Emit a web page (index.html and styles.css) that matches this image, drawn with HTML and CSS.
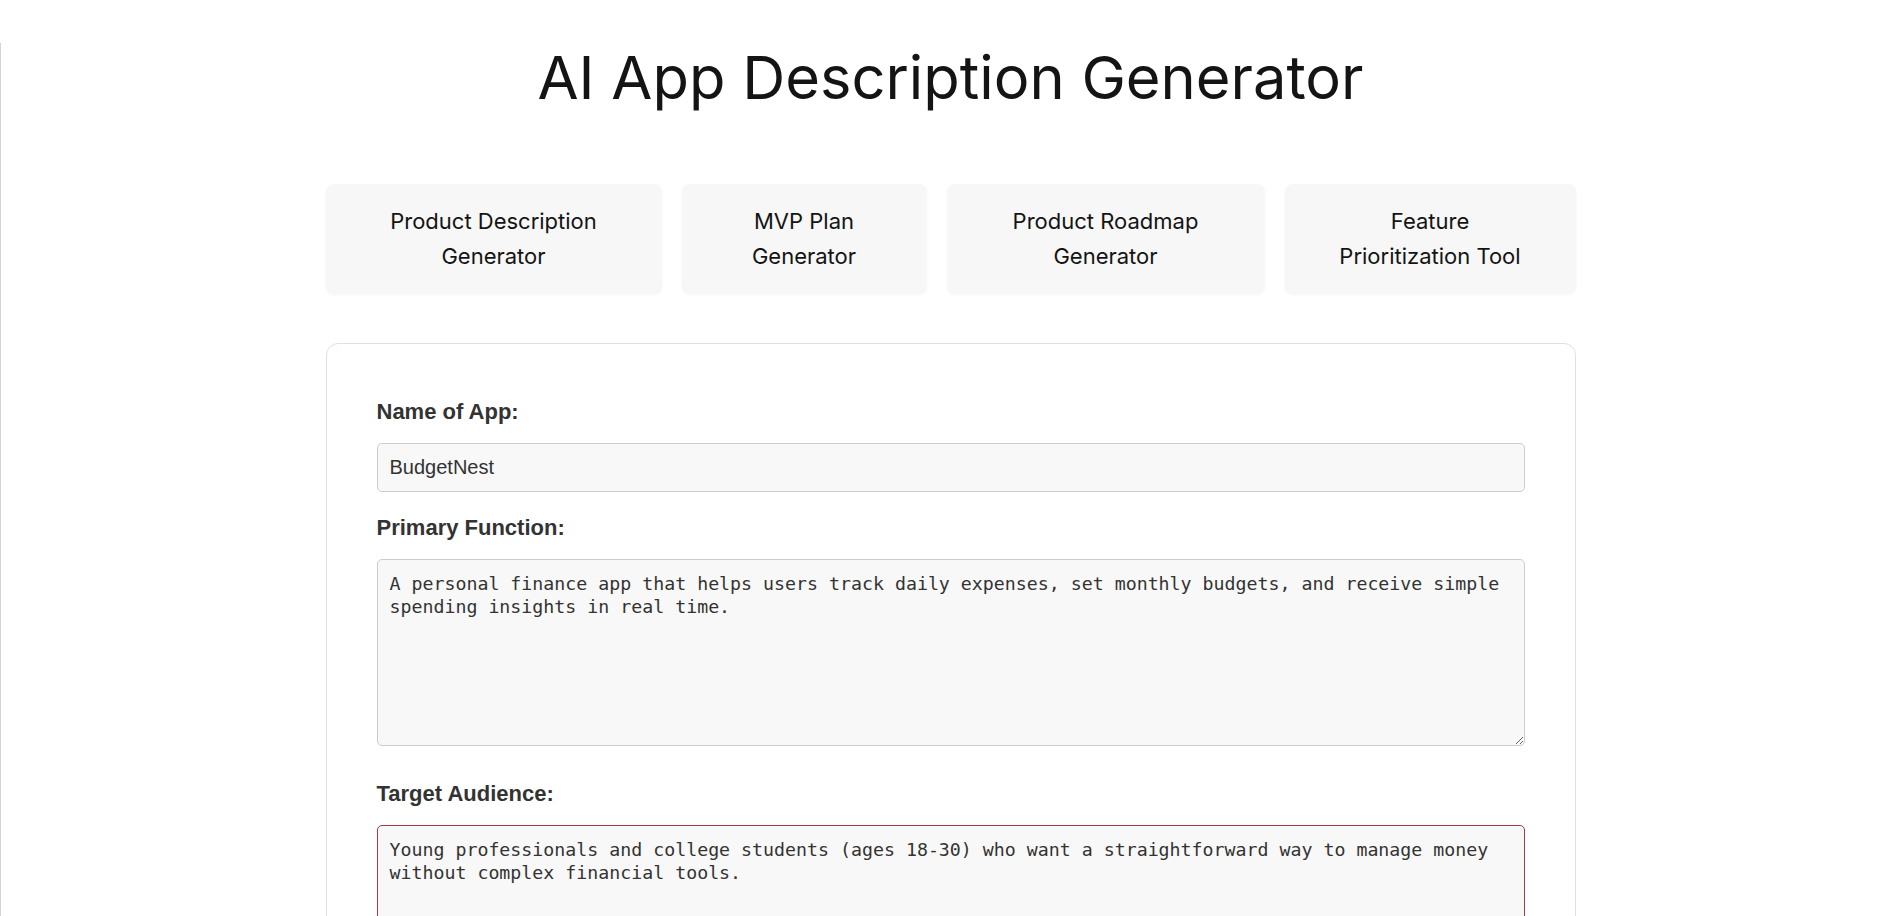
FILE: index.html
```html
<!DOCTYPE html>
<html lang="en">
<head>
<meta charset="utf-8">
<title>AI App Description Generator</title>
<link rel="stylesheet" href="styles.css">
</head>
<body>
<div class="page">
  <h1 class="title">AI App Description Generator</h1>
  <nav class="tabs">
    <a class="tab" href="#">Product Description<br>Generator</a>
    <a class="tab" href="#">MVP Plan<br>Generator</a>
    <a class="tab" href="#">Product Roadmap<br>Generator</a>
    <a class="tab" href="#">Feature<br>Prioritization Tool</a>
  </nav>
  <form class="card">
    <label class="label" for="app-name">Name of App:</label>
    <input class="field" id="app-name" type="text" value="BudgetNest">
    <label class="label" for="primary">Primary Function:</label>
    <textarea class="area" id="primary">A personal finance app that helps users track daily expenses, set monthly budgets, and receive simple spending insights in real time.</textarea>
    <label class="label" for="audience">Target Audience:</label>
    <textarea class="area area-active" id="audience">Young professionals and college students (ages 18-30) who want a straightforward way to manage money without complex financial tools.</textarea>
  </form>
</div>
<script src="script.js"></script>
</body>
</html>
```

FILE: styles.css
```css
* { box-sizing: border-box; }

html, body {
  margin: 0;
  padding: 0;
  background: #ffffff;
}

body {
  font-family: Inter, "Liberation Sans", sans-serif;
  color: #1a1a1a;
  overflow: hidden;
}

.page {
  margin-top: 43px;
  min-height: calc(100vh - 43px);
  border-left: 1px solid #d3d3d3;
  padding-right: 3px;
}

.title {
  margin: 0 0 72px;
  font-family: Inter, sans-serif;
  font-weight: 400;
  font-size: 59.6px;
  line-height: 69px;
  text-align: center;
  color: #141414;
}

.tabs {
  width: 1250px;
  margin: 0 auto;
  display: grid;
  grid-template-columns: 336fr 245fr 318fr 291fr;
  gap: 20px;
}

.tab {
  display: block;
  padding: 20px 10px;
  background: #f7f7f7;
  border-radius: 8px;
  box-shadow: 0 1px 3px rgba(0, 0, 0, 0.04);
  font-family: Inter, sans-serif;
  font-size: 22px;
  line-height: 35px;
  text-align: center;
  color: #141414;
  text-decoration: none;
}

.card {
  width: 1250px;
  margin: 49px auto 0;
  padding: 55px 50px 60px;
  border: 1px solid #e0e0e0;
  border-radius: 12px;
  background: #fff;
}

.label {
  display: block;
  margin-bottom: 18px;
  font-family: "Liberation Sans", Arial, sans-serif;
  font-weight: 700;
  font-size: 22px;
  color: #333;
}

.field {
  display: block;
  width: 100%;
  height: 49px;
  margin: 0 0 23px;
  padding: 12px 12px;
  border: 1px solid #cccccc;
  border-radius: 5px;
  background: #f8f8f8;
  font-family: "Liberation Sans", Arial, sans-serif;
  font-size: 20px;
  line-height: 23px;
  color: #333;
  outline: none;
}

.area {
  display: block;
  width: 100%;
  height: 187px;
  margin: 0 0 35px;
  padding: 12px 12px;
  border: 1px solid #cccccc;
  border-radius: 5px;
  background: #f8f8f8;
  font-family: "DejaVu Sans Mono", monospace;
  font-size: 18.25px;
  line-height: 23px;
  color: #333;
  resize: vertical;
  outline: none;
}

.area-active,
.area:focus {
  border-color: #a23a43;
}
```

FILE: script.js
```js
var ta = document.getElementById('audience');
ta.focus();
ta.setSelectionRange(ta.value.length, ta.value.length);
```
